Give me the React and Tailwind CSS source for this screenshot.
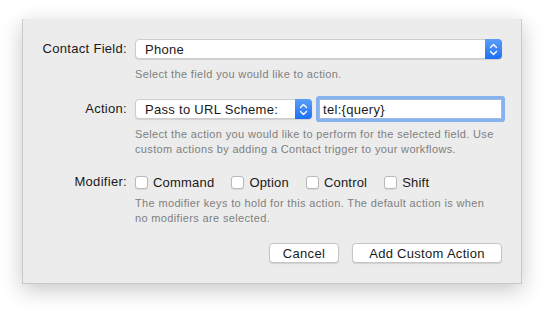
import React from 'react';

const Stepper = () => (
  <div className="w-[17px] self-stretch rounded-r-[4px] bg-gradient-to-b from-[#5b9ef9] to-[#1b6ef5] flex items-center justify-center -my-px -mr-px">
    <svg width="9" height="13" viewBox="0 0 9 13" fill="none" stroke="white" strokeWidth="1.4" strokeLinecap="round" strokeLinejoin="round">
      <path d="M1.5 4.5 L4.5 1.5 L7.5 4.5" />
      <path d="M1.5 8.5 L4.5 11.5 L7.5 8.5" />
    </svg>
  </div>
);

const Select = ({ value, className }) => (
  <div className={`h-5 flex items-center bg-white rounded-[4px] border border-[#cdcdcd] shadow-[0_1px_1px_rgba(0,0,0,0.12)] ${className}`}>
    <span className="flex-1 pl-[9px] text-[13px] tracking-[0.3px] text-[#1a1a1a] leading-none">{value}</span>
    <Stepper />
  </div>
);

const Check = ({ label }) => (
  <label className="flex items-center gap-[5px]">
    <span className="w-[13px] h-[13px] bg-white rounded-[3px] border border-[#b9b9b9] shadow-[0_1px_1px_rgba(0,0,0,0.08)]" />
    <span className="text-[13px] tracking-[0.2px] text-[#1a1a1a] leading-none">{label}</span>
  </label>
);

const Help = ({ children }) => (
  <p className="ml-[112px] w-[360px] text-[11px] tracking-[0.35px] leading-[15px] text-[#7f7f7f]">{children}</p>
);

const Label = ({ children }) => (
  <div className="w-[112px] pr-[8px] text-right text-[13px] tracking-[0.3px] text-[#1a1a1a]">{children}</div>
);

const Button = ({ children, className = '' }) => (
  <button className={`h-5 bg-white rounded-[4px] border border-[#c6c6c6] shadow-[0_1px_1px_rgba(0,0,0,0.12)] text-[13px] tracking-[0.3px] text-[#1a1a1a] leading-none ${className}`}>
    {children}
  </button>
);

export default function App() {
  return (
    <div className="w-[545px] h-[311px] bg-white overflow-hidden" style={{ fontFamily: '"Liberation Sans", Arial, sans-serif' }}>
      <div className="ml-[22px] mt-[19px] w-[500px] h-[265px] bg-[#ececec] border-x border-b border-[#c9c9c9] shadow-[0_6px_20px_rgba(0,0,0,0.22)] pt-[20px]">
        <div className="flex items-center">
          <Label>Contact Field:</Label>
          <Select value="Phone" className="w-[367px]" />
        </div>
        <div className="mt-[8px]">
          <Help>Select the field you would like to action.</Help>
        </div>

        <div className="flex items-center mt-[17px]">
          <Label>Action:</Label>
          <Select value="Pass to URL Scheme:" className="w-[177px]" />
          <div className="ml-[7px] w-[183px] h-5 bg-white border border-[#9fb9df] shadow-[0_0_0_3px_rgba(101,158,240,0.75)] rounded-[1px] flex items-center pl-[3px]">
            <span className="text-[13px] tracking-[0.3px] text-[#1a1a1a] leading-none">tel:{'{query}'}</span>
          </div>
        </div>
        <div className="mt-[8px]">
          <Help>
            Select the action you would like to perform for the selected field. Use custom actions by adding a Contact trigger to your workflows.
          </Help>
        </div>

        <div className="flex items-center mt-[16px] h-[18px]">
          <Label>Modifier:</Label>
          <div className="flex items-center gap-[17px]">
            <Check label="Command" />
            <Check label="Option" />
            <Check label="Control" />
            <Check label="Shift" />
          </div>
        </div>
        <div className="mt-[5px]">
          <Help>
            The modifier keys to hold for this action. The default action is when no modifiers are selected.
          </Help>
        </div>

        <div className="flex justify-end gap-[13px] mt-[17px] pr-[19px]">
          <Button className="w-[70px]">Cancel</Button>
          <Button className="w-[150px]">Add Custom Action</Button>
        </div>
      </div>
    </div>
  );
}
